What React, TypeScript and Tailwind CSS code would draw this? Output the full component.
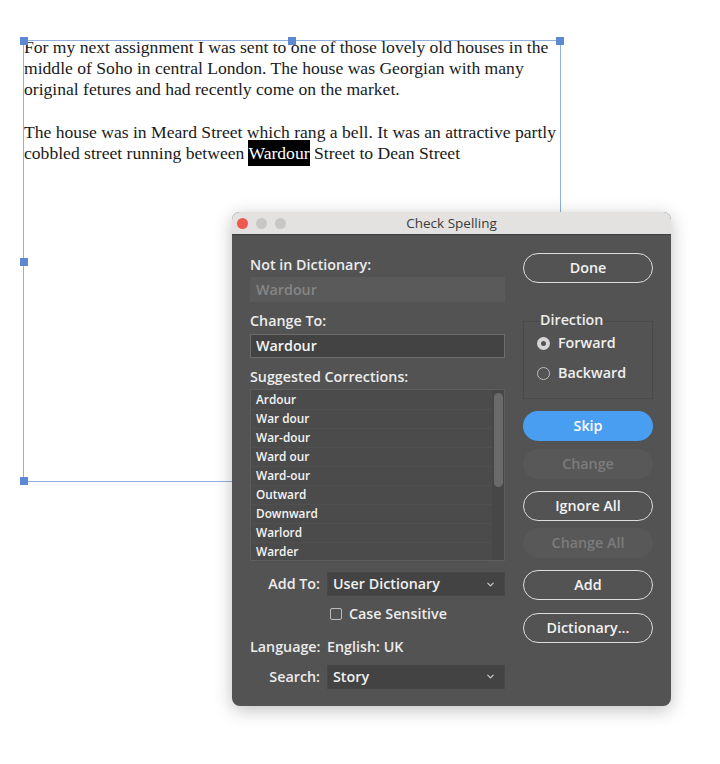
import { ChevronDown } from 'lucide-react';

const suggestions = [
  'Ardour',
  'War dour',
  'War-dour',
  'Ward our',
  'Ward-our',
  'Outward',
  'Downward',
  'Warlord',
  'Warder',
];

const Handle = ({ className }: { className: string }) => (
  <div className={`absolute w-[8px] h-[8px] bg-[#5b8ad3] ${className}`} />
);

const OutlineButton = ({ label }: { label: string }) => (
  <button className="h-[30px] w-[130px] rounded-full border-[1.5px] border-[#dcdcdc] text-[14.3px] font-semibold text-[#f2f2f2]">
    {label}
  </button>
);

const DisabledButton = ({ label }: { label: string }) => (
  <button className="h-[30px] w-[130px] rounded-full bg-[#585858] text-[14.3px] font-semibold text-[#7c7c7c]">
    {label}
  </button>
);

const SelectBox = ({ value }: { value: string }) => (
  <div className="flex h-[24px] w-[178px] items-center justify-between border border-[#474747] bg-[#434343] pl-[5px] pr-[8px] text-[14.3px] font-semibold text-[#f0f0f0]">
    <span>{value}</span>
    <ChevronDown size={11} strokeWidth={2.5} className="text-[#cfcfcf]" />
  </div>
);

const CheckSpelling = () => {
  return (
    <div className="absolute left-[232px] top-[212px] w-[439px] overflow-hidden rounded-[8px] bg-[#535353] shadow-[0_4px_18px_rgba(0,0,0,0.25)] font-['Open_Sans',sans-serif]">
      {/* title bar */}
      <div className="relative flex h-[23px] items-center justify-center bg-[#e4e2e0] border-b border-[#3c3c3c]">
        <div className="absolute left-[5px] flex gap-[8px]">
          <span className="h-[11px] w-[11px] rounded-full bg-[#ee5a52]" />
          <span className="h-[11px] w-[11px] rounded-full bg-[#c9c7c5]" />
          <span className="h-[11px] w-[11px] rounded-full bg-[#c9c7c5]" />
        </div>
        <span className="text-[13.5px] text-[#3a3a3a]">Check Spelling</span>
      </div>

      <div className="flex gap-[18px] pl-[18px] pr-[18px] pt-[18px] pb-[17px]">
        {/* left column */}
        <div className="flex w-[255px] flex-col text-[14.3px] font-semibold text-[#ececec]">
          <div className="leading-[18px] mt-[3px]">Not in Dictionary:</div>
          <div className="mt-[3px] flex h-[25px] items-center bg-[#5a5a5a] pl-[6px] text-[#858585]">
            Wardour
          </div>
          <div className="mt-[10px] leading-[18px]">Change To:</div>
          <div className="mt-[4px] flex h-[24px] items-center border border-[#6c6c6c] bg-[#434343] pl-[5px] text-[#f5f5f5]">
            Wardour
          </div>
          <div className="mt-[10px] leading-[18px]">Suggested Corrections:</div>
          <div className="mt-[3px] flex h-[172px] border border-[#5e5e5e] bg-[#4b4b4b]">
            <div className="flex flex-1 flex-col pt-[1px]">
              {suggestions.map((s) => (
                <div
                  key={s}
                  className="flex h-[19px] shrink-0 items-center border-b border-[#505050] pl-[5px] text-[11.8px] font-semibold text-[#f4f4f4]"
                >
                  {s}
                </div>
              ))}
            </div>
            <div className="flex w-[12px] flex-col items-center pt-[3px] bg-[#474747]">
              <div className="h-[94px] w-[9px] rounded-full bg-[#6a6a6a]" />
            </div>
          </div>

          <div className="mt-[11px] flex items-center gap-[7px]">
            <span className="w-[70px] text-right">Add To:</span>
            <SelectBox value="User Dictionary" />
          </div>
          <div className="mt-[7px] flex items-center gap-[7px] pl-[80px]">
            <span className="h-[12px] w-[12px] rounded-[2px] border border-[#bdbdbd]" />
            <span>Case Sensitive</span>
          </div>
          <div className="mt-[12px] flex items-center gap-[7px]">
            <span className="w-[70px] text-right">Language:</span>
            <span>English: UK</span>
          </div>
          <div className="mt-[7px] flex items-center gap-[7px]">
            <span className="w-[70px] text-right">Search:</span>
            <SelectBox value="Story" />
          </div>
        </div>

        {/* right column */}
        <div className="flex w-[130px] flex-col">
          <OutlineButton label="Done" />
          <div className="relative mt-[38px] h-[78px] border border-[#4a4a4a]">
            <span className="absolute -top-[11px] left-[16px] bg-[#535353] text-[14.3px] font-semibold text-[#ececec] leading-[18px]">
              Direction
            </span>
            <div className="flex flex-col gap-[12px] pl-[13px] pt-[12px] text-[14.3px] font-semibold text-[#f0f0f0]">
              <div className="flex items-center gap-[8px] leading-[18px]">
                <span className="flex h-[13px] w-[13px] items-center justify-center rounded-full bg-[#d6d6d6]">
                  <span className="h-[5px] w-[5px] rounded-full bg-[#535353]" />
                </span>
                Forward
              </div>
              <div className="flex items-center gap-[8px] leading-[18px]">
                <span className="h-[13px] w-[13px] rounded-full border border-[#bcbcbc]" />
                Backward
              </div>
            </div>
          </div>
          <button className="mt-[12px] h-[30px] w-[130px] rounded-full bg-[#4a9ef2] text-[14.3px] font-semibold text-white">
            Skip
          </button>
          <div className="mt-[8px]">
            <DisabledButton label="Change" />
          </div>
          <div className="mt-[12px]">
            <OutlineButton label="Ignore All" />
          </div>
          <div className="mt-[7px]">
            <DisabledButton label="Change All" />
          </div>
          <div className="mt-[12px]">
            <OutlineButton label="Add" />
          </div>
          <div className="mt-[13px]">
            <OutlineButton label="Dictionary..." />
          </div>
        </div>
      </div>
    </div>
  );
};

export default function App() {
  return (
    <div className="relative h-[764px] w-[720px] overflow-hidden bg-white">
      <div className="relative ml-[23px] mt-[40px] h-[442px] w-[538px] border border-[#8fb0dc]">
        <Handle className="-left-[4px] -top-[4px]" />
        <Handle className="left-[264px] -top-[4px]" />
        <Handle className="-right-[4px] -top-[4px]" />
        <Handle className="-left-[4px] top-[217px]" />
        <Handle className="-left-[4px] -bottom-[4px]" />
        <div className="-mt-[4px] whitespace-nowrap font-['Liberation_Serif',serif] text-[17.6px] leading-[21.2px] text-[#1a1a1a]">
          <p>
            For my next assignment I was sent to one of those lovely old houses in the
            <br />
            middle of Soho in central London. The house was Georgian with many
            <br />
            original fetures and had recently come on the market.
          </p>
          <p className="mt-[21.2px]">
            The house was in Meard Street which rang a bell. It was an attractive partly
            <br />
            cobbled street running between{' '}
            <span className="bg-black py-[3px] text-white">Wardour</span> Street to Dean Street
          </p>
        </div>
      </div>
      <CheckSpelling />
    </div>
  );
}
